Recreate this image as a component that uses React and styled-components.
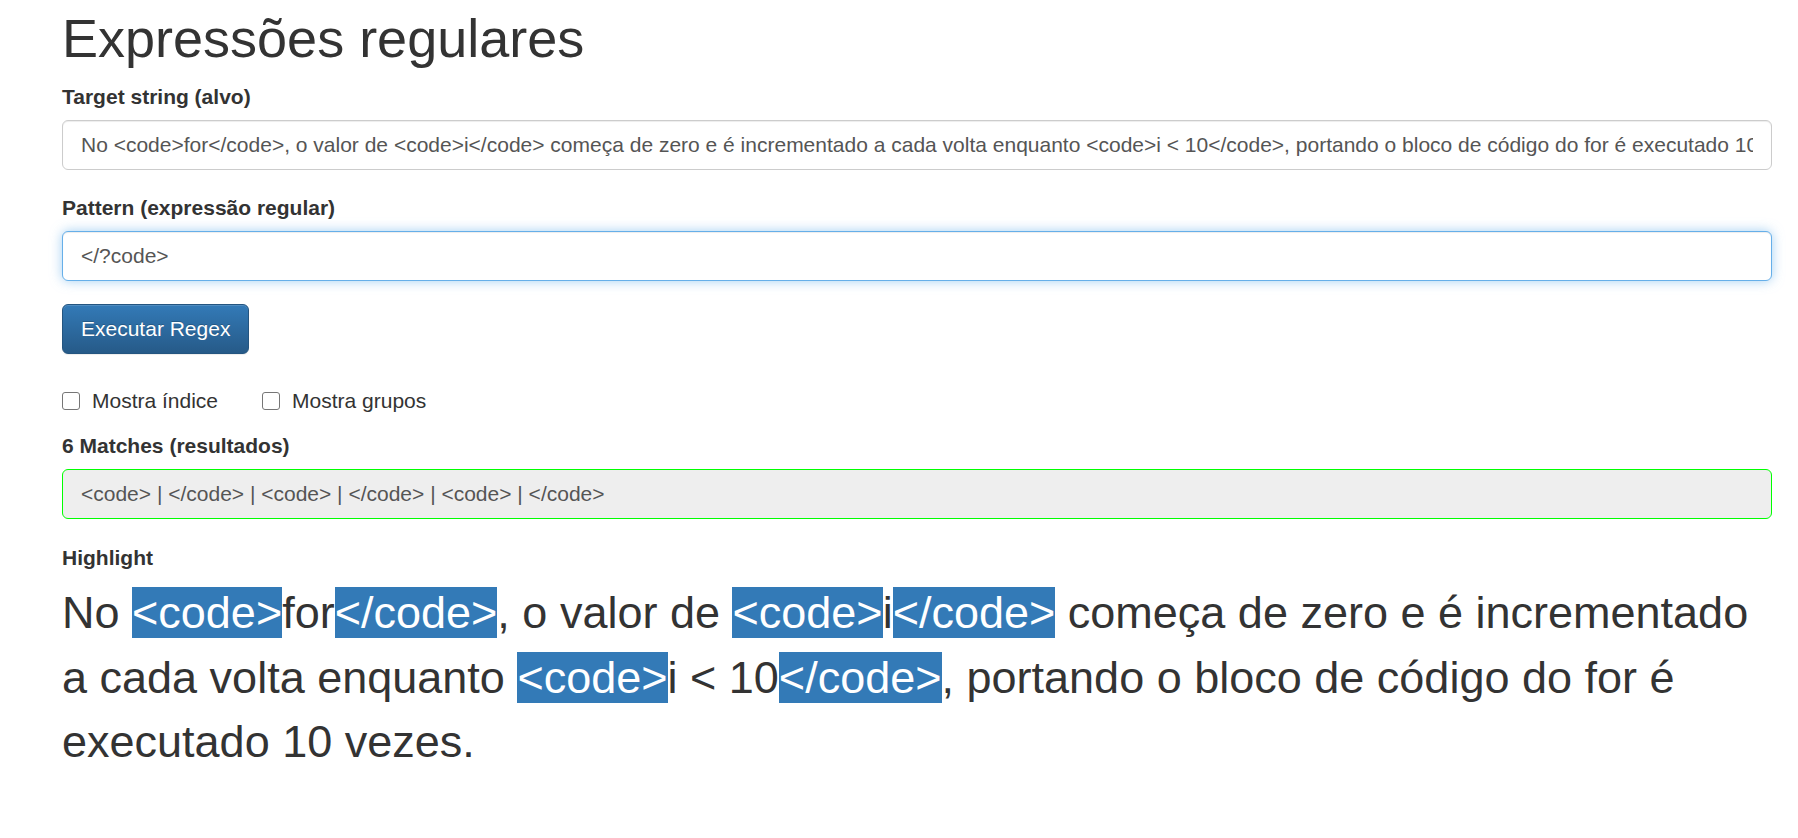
import React from "react";
import styled, { createGlobalStyle, css } from "styled-components";

const GlobalStyle = createGlobalStyle`
  html, body { margin: 0; padding: 0; background: #fff; }
  body {
    font-family: "Liberation Sans", Arial, Helvetica, sans-serif;
    font-size: 21px;
    line-height: 1.42857;
    color: #333;
  }
  * { box-sizing: border-box; }
`;

const Page = styled.div`
  padding: 9px 26px 40px 62px;
`;

const Title = styled.h1`
  margin: 0 0 14px;
  font-size: 54px;
  font-weight: 500;
  line-height: 1.1;
  color: #333;
`;

const FormGroup = styled.div`
  margin-bottom: ${(p) => p.$mb ?? 23}px;
`;

const Label = styled.label`
  display: block;
  margin-bottom: 8px;
  font-size: 21px;
  font-weight: 700;
  line-height: 30px;
  color: #333;
`;

const TextInput = styled.input`
  display: block;
  width: 100%;
  height: 50px;
  padding: 9px 18px;
  font-family: inherit;
  font-size: 21px;
  line-height: 30px;
  color: #555;
  background: #fff;
  border: 1px solid #ccc;
  border-radius: 6px;
  box-shadow: inset 0 1px 1px rgba(0, 0, 0, 0.075);
  outline: none;
  ${(p) =>
    p.$focused &&
    css`
      border-color: #66afe9;
      box-shadow: inset 0 1px 1px rgba(0, 0, 0, 0.075),
        0 0 12px rgba(102, 175, 233, 0.6);
    `}
`;

const Button = styled.button`
  display: inline-block;
  height: 50px;
  padding: 9px 18px;
  font-family: inherit;
  font-size: 21px;
  line-height: 30px;
  color: #fff;
  text-shadow: 0 -1px 0 rgba(0, 0, 0, 0.2);
  background-image: linear-gradient(to bottom, #337ab7 0, #265a88 100%);
  border: 1px solid #245580;
  border-radius: 6px;
  box-shadow: inset 0 1px 0 rgba(255, 255, 255, 0.15), 0 1px 1px rgba(0, 0, 0, 0.075);
  cursor: pointer;
`;

const CheckRow = styled.div`
  display: flex;
  align-items: center;
  gap: 44px;
  height: 30px;
  margin: 32px 0 15px;
`;

const CheckLabel = styled.label`
  display: inline-flex;
  align-items: center;
  gap: 12px;
  font-size: 21px;
  line-height: 30px;
  color: #333;
  cursor: pointer;
`;

const CheckBox = styled.input.attrs({ type: "checkbox" })`
  appearance: none;
  -webkit-appearance: none;
  margin: 0;
  width: 18px;
  height: 18px;
  border: 1.5px solid #767676;
  border-radius: 3px;
  background: #fff;
`;

const ResultBox = styled.div`
  height: 50px;
  padding: 9px 18px;
  font-size: 21px;
  line-height: 30px;
  color: #555;
  background: #eee;
  border: 1px solid #00ff00;
  border-radius: 6px;
  white-space: nowrap;
  overflow: hidden;
`;

const HighlightText = styled.p`
  margin: 0;
  font-size: 45px;
  line-height: 64.3px;
  color: #333;
`;

const Mark = styled.span`
  background: #337ab7;
  color: #fff;
`;

const target =
  "No <code>for</code>, o valor de <code>i</code> começa de zero e é incrementado a cada volta enquanto <code>i < 10</code>, portando o bloco de código do for é executado 10 vezes.";
const pattern = "</?code>";

function highlight(text, re) {
  const out = [];
  let last = 0;
  let m;
  let k = 0;
  const rx = new RegExp(re, "g");
  while ((m = rx.exec(text))) {
    if (m.index > last) out.push(text.slice(last, m.index));
    out.push(<Mark key={k++}>{m[0]}</Mark>);
    last = m.index + m[0].length;
  }
  if (last < text.length) out.push(text.slice(last));
  return out;
}

export default function App() {
  const matches = target.match(new RegExp(pattern, "g")) || [];
  return (
    <Page>
      <GlobalStyle />
      <Title>Expressões regulares</Title>
      <FormGroup>
        <Label>Target string (alvo)</Label>
        <TextInput defaultValue={target} readOnly />
      </FormGroup>
      <FormGroup>
        <Label>Pattern (expressão regular)</Label>
        <TextInput $focused defaultValue={pattern} readOnly />
      </FormGroup>
      <Button>Executar Regex</Button>
      <CheckRow>
        <CheckLabel>
          <CheckBox />
          Mostra índice
        </CheckLabel>
        <CheckLabel>
          <CheckBox />
          Mostra grupos
        </CheckLabel>
      </CheckRow>
      <FormGroup $mb={24}>
        <Label>{matches.length} Matches (resultados)</Label>
        <ResultBox>{matches.join(" | ")}</ResultBox>
      </FormGroup>
      <div>
        <Label>Highlight</Label>
        <HighlightText>{highlight(target, pattern)}</HighlightText>
      </div>
    </Page>
  );
}
